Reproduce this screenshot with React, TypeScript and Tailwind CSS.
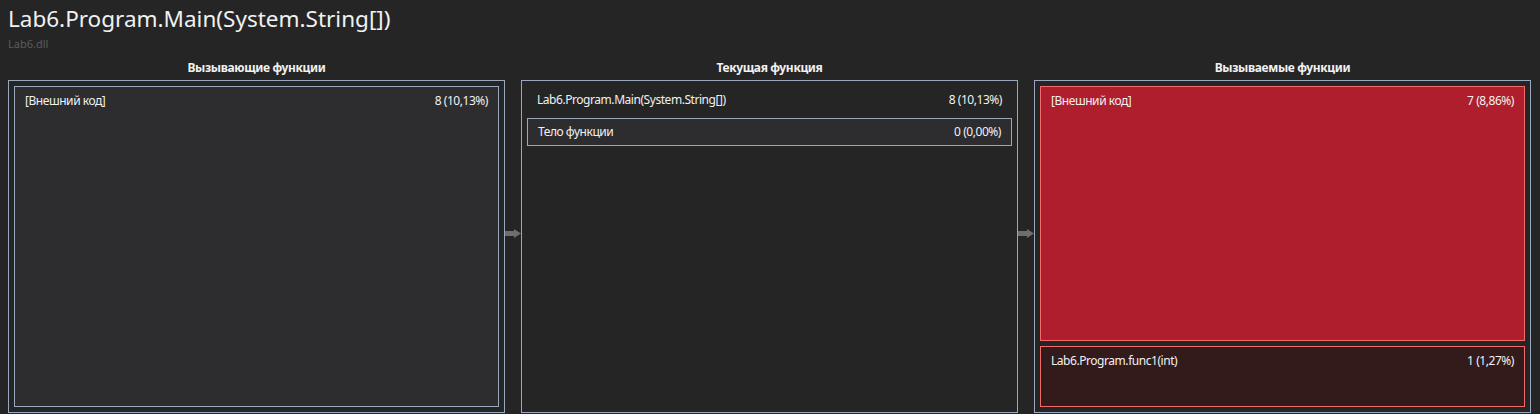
import React from "react";

const font = { fontFamily: '"Noto Sans", "Open Sans", sans-serif' };

function Arrow() {
  return (
    <div className="w-[16px] shrink-0 pt-[149px]">
      <svg width="16" height="10" viewBox="0 0 16 10" className="block">
        <rect x="0" y="2" width="10" height="5" fill="#6e6e6e" />
        <polygon points="9,0 16,4.5 9,9" fill="#6e6e6e" />
      </svg>
    </div>
  );
}

function Header({ children }: { children: React.ReactNode }) {
  return (
    <div className="h-[25px] flex items-start justify-center pt-[5px] text-[12px] font-bold leading-[16px] tracking-[-0.35px] text-[#f1f1f1]">
      {children}
    </div>
  );
}

function Row({ name, value }: { name: string; value: string }) {
  return (
    <div className="flex justify-between px-[10px] text-[12px] leading-[16px] tracking-[-0.45px] text-[#f1f1f1]">
      <span>{name}</span>
      <span>{value}</span>
    </div>
  );
}

export default function App() {
  return (
    <div
      className="w-[1540px] h-[414px] bg-[#252526] pl-[8px] pr-[9px] overflow-hidden"
      style={font}
    >
      <div className="pt-[3px] h-[55px]">
        <div className="text-[22.5px] leading-[32px] text-[#f1f1f1]">
          Lab6.Program.Main(System.String[])
        </div>
        <div className="text-[11px] leading-[16px] mt-[1px] text-[#5c5c5c]">Lab6.dll</div>
      </div>
      <div className="flex">
        {/* Left column */}
        <div className="w-[497px] shrink-0 flex flex-col">
          <Header>Вызывающие функции</Header>
          <div className="h-[333px] border border-[#9aa8bd] p-[5px]">
            <div className="h-full border border-[#9aa8bd] bg-[#2d2d30] pt-[6px]">
              <Row name="[Внешний код]" value="8 (10,13%)" />
            </div>
          </div>
        </div>
        <div className="flex flex-col">
          <div className="h-[25px]" />
          <Arrow />
        </div>
        {/* Middle column */}
        <div className="w-[497px] shrink-0 flex flex-col">
          <Header>Текущая функция</Header>
          <div className="h-[333px] border border-[#9aa8bd] p-[5px]">
            <div className="pt-[6px] pb-[10px]">
              <Row name="Lab6.Program.Main(System.String[])" value="8 (10,13%)" />
            </div>
            <div className="h-[28px] border border-[#9aa8bd] bg-[#2d2d30] flex flex-col justify-center">
              <Row name="Тело функции" value="0 (0,00%)" />
            </div>
          </div>
        </div>
        <div className="flex flex-col">
          <div className="h-[25px]" />
          <Arrow />
        </div>
        {/* Right column */}
        <div className="w-[497px] shrink-0 flex flex-col">
          <Header>Вызываемые функции</Header>
          <div className="h-[333px] border border-[#9aa8bd] p-[5px] flex flex-col gap-[5px]">
            <div className="h-[255px] shrink-0 border border-[#f26b6b] bg-[#ae1e2d] pt-[6px]">
              <Row name="[Внешний код]" value="7 (8,86%)" />
            </div>
            <div className="flex-1 border border-[#f26b6b] bg-[#331b1c] pt-[6px]">
              <Row name="Lab6.Program.func1(int)" value="1 (1,27%)" />
            </div>
          </div>
        </div>
      </div>
    </div>
  );
}
